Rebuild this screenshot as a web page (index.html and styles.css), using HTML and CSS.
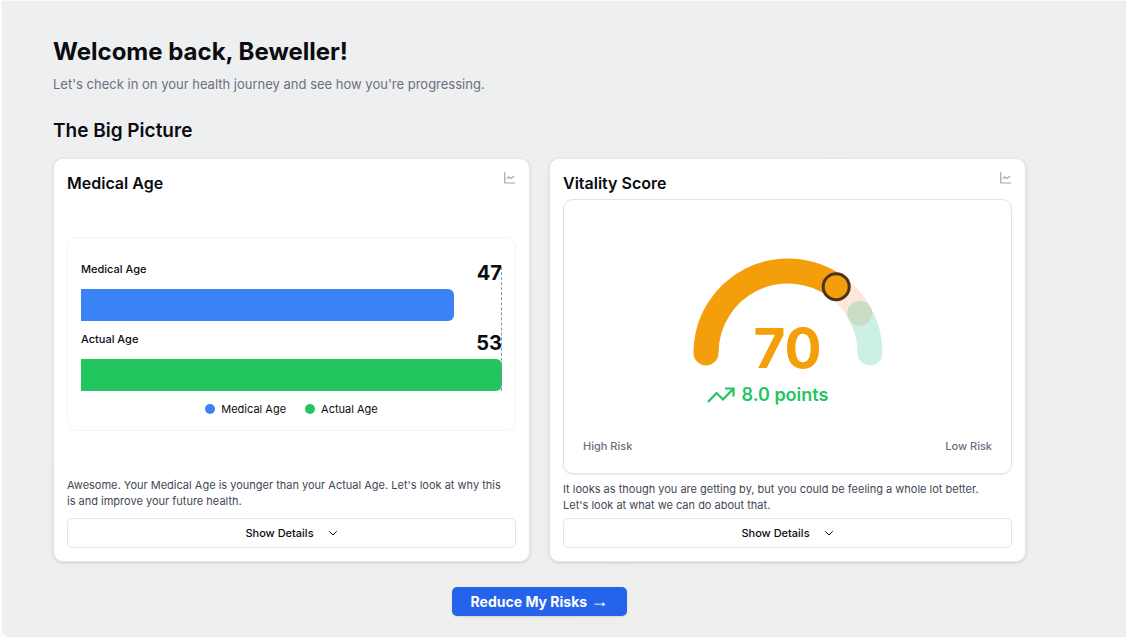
FILE: index.html
```html
<!DOCTYPE html>
<html lang="en">
<head>
<meta charset="utf-8">
<meta name="viewport" content="width=device-width, initial-scale=1">
<title>Your health dashboard</title>
<link rel="stylesheet" href="styles.css">
</head>
<body>
<main class="page">
  <header class="intro">
    <h1 class="intro-title">Welcome back, Beweller!</h1>
    <p class="intro-text">Let's check in on your health journey and see how you're progressing.</p>
  </header>
  <h2 class="section-title">The Big Picture</h2>
  <div class="cards">
    <section class="card">
      <div class="card-head">
        <h3 class="card-title">Medical Age</h3>
        <button class="trend-button" type="button" aria-label="Medical Age history">
          <svg class="trend-icon" viewBox="0 0 12 12" fill="none" stroke="currentColor" stroke-width="1.200" stroke-linecap="round" stroke-linejoin="round"><path d="M.8 .6V11H10.800"/><path d="M3.200 6.200L5 4.800L6.800 6.600L9.800 4.200"/></svg>
        </button>
      </div>
      <div class="chart-area">
        <div class="age-chart">
          <div class="bars">
            <div class="bar-head"><span class="bar-name">Medical Age</span><span class="bar-value">47</span></div>
            <div class="bar bar-medical" style="width:88.7%"></div>
            <div class="bar-head"><span class="bar-name">Actual Age</span><span class="bar-value">53</span></div>
            <div class="bar bar-actual" style="width:100%"></div>
          </div>
          <ul class="legend">
            <li class="legend-item"><span class="dot dot-medical"></span>Medical Age</li>
            <li class="legend-item"><span class="dot dot-actual"></span>Actual Age</li>
          </ul>
        </div>
      </div>
      <p class="card-text card-text-spaced">Awesome. Your Medical Age is younger than your Actual Age. Let's look at why this is and improve your future health.</p>
      <button class="details-button" type="button">Show Details
        <svg class="chevron" viewBox="0 0 10 10" fill="none" stroke="currentColor" stroke-linecap="round" stroke-linejoin="round"><path d="M1.500 3.500L5 7L8.500 3.500"/></svg>
      </button>
    </section>
    <section class="card">
      <div class="card-head">
        <h3 class="card-title">Vitality Score</h3>
        <button class="trend-button" type="button" aria-label="Vitality Score history">
          <svg class="trend-icon" viewBox="0 0 12 12" fill="none" stroke="currentColor" stroke-width="1.200" stroke-linecap="round" stroke-linejoin="round"><path d="M.8 .6V11H10.800"/><path d="M3.200 6.200L5 4.800L6.800 6.600L9.800 4.200"/></svg>
        </button>
      </div>
      <div class="score-panel">
        <div class="gauge">
          <svg class="gauge-arc" viewBox="0 0 190 110" fill="none" stroke-width="25" stroke-linecap="round">
            <path d="M143.200 28.660A82 82 0 0 1 166.720 55.250" stroke="#f97316" stroke-opacity=".17"/>
            <path d="M166.720 55.250A82 82 0 0 1 177 95" stroke="#10b981" stroke-opacity=".21"/>
            <path d="M13 95A82 82 0 0 1 143.200 28.660" stroke="#f59e0b"/>
            <circle cx="143.200" cy="28.660" r="13" fill="#f59e0b" stroke="#4a341c" stroke-width="3"/>
          </svg>
          <span class="score">70</span>
        </div>
        <div class="delta">
          <svg class="delta-icon" viewBox="0 0 28 18" fill="none" stroke="currentColor" stroke-width="2.200"><path d="M1 16L9.500 7L16 13.500L26 3"/><path d="M18 2.500H26.500V10.500"/></svg>
          <span>8.0 points</span>
        </div>
        <div class="risk-scale"><span>High Risk</span><span>Low Risk</span></div>
      </div>
      <p class="card-text">It looks as though you are getting by, but you could be feeling a whole lot better. Let's look at what we can do about that.</p>
      <button class="details-button" type="button">Show Details
        <svg class="chevron" viewBox="0 0 10 10" fill="none" stroke="currentColor" stroke-linecap="round" stroke-linejoin="round"><path d="M1.500 3.500L5 7L8.500 3.500"/></svg>
      </button>
    </section>
  </div>
  <div class="actions"><button class="primary-button" type="button">Reduce My Risks <span class="arrow">→</span></button></div>
</main>
</body>
</html>
```
FILE: styles.css
```css
* { box-sizing: border-box; }
body {
  margin: 0;
  min-height: 100vh;
  display: flex;
  padding: 1px 0 1px 2px;
  background: #fbfbfb;
  color: #0a0c10;
  font-family: Inter, "Liberation Sans", sans-serif;
}
h1, h2, h3, p, ul { margin: 0; padding: 0; }
button { font-family: inherit; cursor: pointer; }
.page {
  flex: 1;
  padding: 35px 100px 20px 51px;
  border-bottom-left-radius: 8px;
  background: linear-gradient(135deg, #eeeff1, #eeeeec);
}
.intro-title { font-size: 24px; line-height: 32px; font-weight: 700; }
.intro-text { margin-top: 7px; font-size: 13px; line-height: 18px; color: #6b7080; }
.section-title { margin-top: 24px; font-size: 19px; line-height: 28px; font-weight: 600; }
.cards { display: grid; grid-template-columns: 1fr 1fr; gap: 19px; margin-top: 13px; }
.card {
  display: flex;
  flex-direction: column;
  padding: 13px;
  border: 1px solid #e6e7ea;
  border-radius: 10px;
  background: #fff;
  box-shadow: 0 1px 3px rgba(0, 0, 0, .14);
}
.card-head { display: flex; justify-content: space-between; align-items: flex-start; }
.card-title { font-size: 16px; line-height: 22px; font-weight: 600; }
.trend-button { display: flex; padding: 0; border: 0; background: none; color: #9ca3b4; }
.trend-icon { width: 12px; height: 12px; }
.chart-area { flex: 1; display: flex; flex-direction: column; justify-content: center; padding-top: 4px; }
.age-chart { padding: 24px 13px 13px; border: 1px solid #f4f4f6; border-radius: 10px; }
.bars { position: relative; }
.bars::after {
  content: "";
  position: absolute;
  top: 5px;
  right: 0;
  bottom: 0;
  border-right: 1px dashed #8b90a0;
}
.bar-head { display: flex; justify-content: space-between; align-items: center; height: 22px; margin-bottom: 5px; }
.bar + .bar-head { margin-top: 11px; }
.bar-name { align-self: flex-start; font-size: 11px; line-height: 14px; font-weight: 500; }
.bar-value { font-size: 20px; line-height: 22px; font-weight: 700; }
.bar { height: 32px; border-radius: 0 6px 6px 0; }
.bar-medical, .dot-medical { background: #3b82f6; }
.bar-actual, .dot-actual { background: #22c55e; }
.legend { display: flex; justify-content: center; gap: 19px; margin-top: 10px; list-style: none; }
.legend-item { display: flex; align-items: center; gap: 6px; font-size: 11px; line-height: 16px; }
.dot { width: 10px; height: 10px; border-radius: 50%; }
.card-text { margin: 7px 0 5px; padding-right: 8px; font-size: 11px; line-height: 16px; color: #3f4756; }
.card-text-spaced { margin-bottom: 9px; }
.details-button {
  display: flex;
  align-items: center;
  justify-content: center;
  gap: 14px;
  height: 30px;
  padding: 0;
  border: 1px solid #e4e5e8;
  border-radius: 5px;
  background: #fff;
  color: #0a0c10;
  font-size: 11px;
  font-weight: 500;
}
.chevron { width: 10px; height: 10px; }
.score-panel {
  display: flex;
  flex-direction: column;
  align-items: center;
  margin-top: 5px;
  padding: 58px 19px 18px;
  border: 1px solid #e2e3e6;
  border-radius: 10px;
  box-shadow: 0 1px 2px rgba(0, 0, 0, .08);
}
.gauge { display: grid; justify-items: center; align-items: end; width: 190px; }
.gauge-arc, .score { grid-area: 1 / 1; }
.gauge-arc { display: block; width: 190px; height: 110px; }
.score { font-size: 55px; line-height: 39px; font-weight: 700; color: #f59e0b; }
.delta { display: flex; align-items: center; gap: 7px; margin-top: 15px; padding-right: 40px; font-size: 18px; line-height: 24px; font-weight: 600; color: #22c55e; }
.delta-icon { width: 28px; height: 18px; }
.risk-scale { display: flex; justify-content: space-between; align-self: stretch; margin-top: 30px; font-size: 11px; line-height: 18px; font-weight: 500; color: #6b7080; }
.actions { display: flex; justify-content: center; margin-top: 25px; }
.primary-button {
  padding: 4px 19px;
  border: 0;
  border-radius: 5px;
  background: #2563eb;
  color: #fff;
  font-size: 14px;
  line-height: 21px;
  font-weight: 700;
  box-shadow: 0 1px 2px rgba(0, 0, 0, .1);
}
.arrow { font-family: "Liberation Sans", sans-serif; font-size: 18px; font-weight: 400; }
```
